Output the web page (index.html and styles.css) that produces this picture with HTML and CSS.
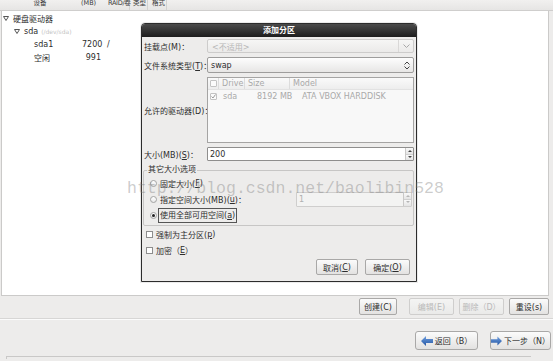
FILE: index.html
```html
<!DOCTYPE html>
<html>
<head>
<meta charset="utf-8">
<title>添加分区</title>
<link rel="stylesheet" href="styles.css">
</head>
<body>
<div class="screen">
  <div class="colhead">
    <span class="ch c-dev">设备</span>
    <span class="ch c-mb">(MB)</span>
    <span class="ch c-raid">RAID/卷</span>
    <span class="ch c-type">类型</span>
    <span class="ch c-fmt">格式</span>
  </div>

  <div class="tree">
    <div class="trow lvl0"><svg class="tri" width="6" height="5" viewBox="0 0 6 5"><polygon points="0.5,0.5 5.5,0.5 3,4.5" fill="none" stroke="#555" stroke-width="1"/></svg>硬盘驱动器</div>
    <div class="trow lvl1"><svg class="tri" width="6" height="5" viewBox="0 0 6 5"><polygon points="0.5,0.5 5.5,0.5 3,4.5" fill="none" stroke="#555" stroke-width="1"/></svg>sda <span class="dim">(/dev/sda)</span></div>
    <div class="trow lvl2"><span class="tname">sda1</span><span class="tsize">7200</span><span class="tmount">/</span></div>
    <div class="trow lvl2"><span class="tname">空闲</span><span class="tsize">991</span></div>
  </div>

  <div class="actions">
    <span class="btn b-create">创建(C)</span>
    <span class="btn dis b-edit">编辑(E)</span>
    <span class="btn dis b-del">删除（D）</span>
    <span class="btn b-reset">重设(s)</span>
  </div>
  <div class="sep"></div>
  <div class="nav">
    <span class="btn navbtn b-back"><svg width="12" height="10" viewBox="0 0 12 10"><defs><linearGradient id="bl" x1="0" y1="0" x2="0" y2="1"><stop offset="0" stop-color="#6f9fe0"/><stop offset="1" stop-color="#2556a3"/></linearGradient></defs><polygon points="0,5 5,0 5,3 12,3 12,7 5,7 5,10" fill="url(#bl)"/></svg>返回（B）</span>
    <span class="btn navbtn b-next"><svg width="12" height="10" viewBox="0 0 12 10"><defs><linearGradient id="bl2" x1="0" y1="0" x2="0" y2="1"><stop offset="0" stop-color="#6f9fe0"/><stop offset="1" stop-color="#2556a3"/></linearGradient></defs><polygon points="12,5 7,0 7,3 0,3 0,7 7,7 7,10" fill="url(#bl2)"/></svg>下一步（N）</span>
  </div>
  <div class="hscroll"></div>

  <div class="dialog">
    <div class="dtitle">添加分区</div>
    <div class="dbody">
      <div class="frow r-mount">
        <span class="flabel">挂载点(M)：</span>
        <div class="field combo disabled">
          <span class="ctext">&lt;不适用&gt;</span>
          <span class="carrow"><svg width="7" height="4" viewBox="0 0 7 4"><polyline points="0.5,0.5 3.5,3.5 6.5,0.5" fill="none" stroke="#a8a8a8" stroke-width="1"/></svg></span>
        </div>
      </div>
      <div class="frow r-fs">
        <span class="flabel">文件系统类型(<u>T</u>)：</span>
        <div class="field combo">
          <span class="ctext">swap</span>
          <span class="cupdown"><svg width="6" height="9" viewBox="0 0 6 9"><polyline points="0.5,3.5 3,1 5.5,3.5" fill="none" stroke="#444" stroke-width="1"/><polyline points="0.5,5.5 3,8 5.5,5.5" fill="none" stroke="#444" stroke-width="1"/></svg></span>
        </div>
      </div>
      <div class="frow r-drives">
        <span class="flabel">允许的驱动器(D)：</span>
        <div class="field listbox">
          <div class="lbh">
            <span class="lc c0"><span class="cb dim-cb"></span></span>
            <span class="lc c1">Drive</span>
            <span class="lc c2">Size</span>
            <span class="lc c3">Model</span>
          </div>
          <div class="lbr">
            <span class="lc d0"><span class="cb dim-cb checked"><svg width="5" height="5" viewBox="0 0 5 5"><polyline points="0.5,2.5 2,4 4.5,0.5" fill="none" stroke="#9a9a9a" stroke-width="1"/></svg></span></span>
            <span class="lc d1">sda</span>
            <span class="lc d2">8192 MB</span>
            <span class="lc d3">ATA VBOX HARDDISK</span>
          </div>
        </div>
      </div>
      <div class="frow r-size">
        <span class="flabel">大小(MB)(<u>S</u>)：</span>
        <div class="field spin">
          <span class="stext">200</span>
          <span class="sbtns"><span class="sb up"></span><span class="sb down"></span></span>
        </div>
      </div>

      <fieldset class="opts">
        <legend>其它大小选项</legend>
        <div class="orow"><span class="radio"></span>固定大小(<u>F</u>)</div>
        <div class="orow"><span class="radio"></span>指定空间大小(MB)(<u>u</u>)：
          <div class="spin small disabled">
            <span class="stext">1</span>
            <span class="sbtns"><span class="sb up"></span><span class="sb down"></span></span>
          </div>
        </div>
        <div class="orow"><span class="radio on"></span><span class="focus">使用全部可用空间(<u>a</u>)</span></div>
      </fieldset>

      <div class="crow"><span class="check"></span>强制为主分区(<u>p</u>)</div>
      <div class="crow"><span class="check"></span>加密（<u>E</u>）</div>

      <div class="dbtns">
        <span class="btn b-cancel">取消(<u>C</u>)</span>
        <span class="btn b-ok">确定(<u>O</u>)</span>
      </div>
    </div>
  </div>

  <div class="watermark">http://blog.csdn.net/baolibin528</div>
</div>
</body>
</html>
```

FILE: styles.css
```css
* { box-sizing: border-box; }

body {
  margin: 0;
  background: #edeceb;
  font-family: "DejaVu Sans", "Noto Sans CJK SC", sans-serif;
  font-size: 8px;
  color: #2d2d2d;
}

.screen {
  position: relative;
  width: 553px;
  height: 361px;
  overflow: hidden;
  background: #edeceb;
}

/* column header */
.colhead {
  height: 11px;
  display: flex;
  background: linear-gradient(#f1f0ef, #e6e5e4);
  border-bottom: 1px solid #cfcecd;
  font-size: 6.5px;
  line-height: 6px;
  color: #3a3a3a;
  overflow: hidden;
  white-space: nowrap;
}
.ch { display: block; height: 10px; }
.c-dev { width: 80px; text-align: center; }
.c-mb { width: 28px; padding-left: 1px; }
.c-raid { width: 22px; border-right: 1px solid #d3d2d1; letter-spacing: -0.3px; }
.c-type { width: 18px; padding-left: 3px; border-right: 1px solid #d3d2d1; }
.c-fmt { width: 19px; padding-left: 4px; border-right: 1px solid #d3d2d1; }

/* tree */
.tree {
  height: 285px;
  width: 548px;
  margin-left: 1px;
  background: #fff;
  border: 1px solid #cbcac9;
  border-top: none;
  padding-top: 1px;
}
.trow {
  height: 13px;
  display: flex;
  align-items: center;
  white-space: nowrap;
}
.tri { margin-right: 4px; flex: none; }
.lvl0 { padding-left: 1px; }
.lvl1 { padding-left: 12px; }
.lvl2 { padding-left: 32px; }
.dim { color: #c4c4c4; font-size: 6px; margin-left: 3px; }
.tname { width: 48px; }
.tsize { width: 19px; text-align: right; }
.tmount { margin-left: 6px; }

/* buttons */
.btn {
  display: flex;
  align-items: center;
  justify-content: center;
  border: 1px solid #a9a8a7;
  border-radius: 2px;
  background: linear-gradient(#fbfbfb, #e3e2e1);
  color: #2d2d2d;
  white-space: nowrap;
}
.btn.dis { color: #b9b9b9; border-color: #cfcecd; background: linear-gradient(#f4f4f3, #eaeae9); }

.actions {
  display: flex;
  justify-content: flex-end;
  height: 17px;
  margin-top: 2px;
  padding-right: 4px;
}
.b-create { width: 38px; margin-right: 12px; }
.b-edit { width: 45px; margin-right: 5px; }
.b-del { width: 45px; margin-right: 5px; }
.b-reset { width: 40px; }

.sep {
  height: 2px;
  margin-top: 3px;
  border-top: 1px solid #d7d6d5;
  border-bottom: 1px solid #fbfbfb;
}

.nav {
  display: flex;
  justify-content: flex-end;
  height: 19px;
  margin-top: 11px;
  padding-right: 2px;
  gap: 12px;
}
.navbtn { gap: 2px; border-radius: 3px; }
.b-back { width: 63px; }
.b-next { width: 61px; }

.hscroll {
  margin: 6px 0 0 6px;
  width: 525px;
  height: 3px;
  border-top: 1px solid #c9c8c7;
  border-left: 1px solid #c9c8c7;
}

/* dialog */
.dialog {
  position: absolute;
  left: 141px;
  top: 23px;
  width: 276px;
  height: 259px;
  background: #edeceb;
  border: 1px solid #2c2c2c;
  border-radius: 4px 4px 0 0;
  box-shadow: 0 0 0 1px rgba(0,0,0,0.08);
}
.dtitle {
  height: 13px;
  line-height: 13px;
  background: linear-gradient(#4b4b4b, #1d1d1d);
  color: #fff;
  font-weight: bold;
  text-align: center;
  border-radius: 3px 3px 0 0;
}
.dbody { padding: 2px 2px 0 2px; }

.frow { display: flex; align-items: center; }
.flabel { width: 63px; flex: none; white-space: nowrap; }
.field { flex: 1; }
.r-fs, .r-drives, .r-size { margin-top: 4px; }

.combo {
  display: flex;
  align-items: center;
  border: 1px solid #9e9d9c;
  border-radius: 2px;
  background: linear-gradient(#fdfdfd, #e7e6e5);
}
.r-mount .combo { height: 14px; }
.r-fs .combo { height: 16px; }
.combo .ctext { flex: 1; padding-left: 3px; }
.combo.disabled { border-color: #cdcccb; background: linear-gradient(#f6f6f5, #ebeae9); color: #b7b7b7; }
.combo.disabled .ctext { padding-left: 4px; }
.carrow {
  width: 15px;
  height: 100%;
  border-left: 1px solid #d9d8d7;
  display: flex;
  align-items: center;
  justify-content: center;
}
.cupdown { width: 12px; display: flex; justify-content: center; }

.listbox {
  height: 66px;
  border: 1px solid #a5a4a3;
  background: #f8f8f8;
  color: #a9a9a9;
}
.lbh {
  display: flex;
  height: 12px;
  align-items: stretch;
  background: linear-gradient(#fafafa, #ededed);
  border-bottom: 1px solid #e2e2e2;
}
.lbr { display: flex; height: 13px; align-items: center; }
.lc { display: flex; align-items: center; white-space: nowrap; }
.c0, .d0 { width: 11px; justify-content: center; }
.c0 { border-right: 1px solid #dcdcdc; }
.c1 { width: 26px; padding-left: 3px; border-right: 1px solid #dcdcdc; }
.c2 { width: 45px; padding-left: 3px; border-right: 1px solid #dcdcdc; }
.c3 { padding-left: 3px; }
.d1 { width: 34px; padding-left: 4px; }
.d2 { width: 45px; padding-left: 4px; }
.d3 { padding-left: 4px; }

.cb {
  width: 7px;
  height: 7px;
  border: 1px solid #c3c3c3;
  background: #fbfbfb;
  border-radius: 1px;
  display: flex;
  align-items: center;
  justify-content: center;
}

.spin {
  display: flex;
  align-items: center;
  height: 14px;
  border: 1px solid #8f8e8d;
  background: #fff;
  border-radius: 1px;
}
.spin .stext { flex: 1; padding-left: 2px; }
.sbtns {
  width: 8px;
  height: 100%;
  display: flex;
  flex-direction: column;
  border-left: 1px solid #c9c8c7;
}
.sb {
  flex: 1;
  position: relative;
  background: linear-gradient(#f9f9f9, #e4e4e4);
}
.sb.up { border-bottom: 1px solid #cfcfcf; }
.sb::after {
  content: "";
  position: absolute;
  left: 1.5px;
  border-left: 2px solid transparent;
  border-right: 2px solid transparent;
}
.sb.up::after { top: 2px; border-bottom: 2px solid #444; }
.sb.down::after { top: 1px; border-top: 2px solid #444; }

.spin.small {
  margin-left: auto;
  width: 116px;
  height: 15px;
}
.spin.disabled { border-color: #cfcecd; background: #f3f3f2; color: #b0b0b0; }
.spin.disabled .sb.up::after { border-bottom-color: #b5b5b5; }
.spin.disabled .sb.down::after { border-top-color: #b5b5b5; }

.opts {
  margin: 4px 0 0 -1px;
  padding: 0 1px 2px 2px;
  border: 1px solid #c7c6c5;
  border-radius: 2px;
  min-width: 0;
}
.opts legend {
  padding: 0 1px;
  margin-left: 1px;
  line-height: 10px;
  height: 10px;
}
.orow {
  display: flex;
  align-items: center;
  height: 16px;
  white-space: nowrap;
}
.radio {
  width: 7px;
  height: 7px;
  margin: 0 3px 0 4px;
  border: 1px solid #a3a3a3;
  border-radius: 50%;
  background: linear-gradient(#fff, #e8e8e8);
  flex: none;
  position: relative;
}
.radio.on::after {
  content: "";
  position: absolute;
  left: 1px;
  top: 1px;
  width: 3px;
  height: 3px;
  border-radius: 50%;
  background: #222;
}
.focus {
  outline: 1px solid #555;
  padding: 0 1px;
  margin-left: -1px;
  line-height: 13px;
}

.crow {
  display: flex;
  align-items: center;
  height: 16px;
  padding-left: 2px;
  white-space: nowrap;
}
.check {
  width: 7px;
  height: 7px;
  margin-right: 3px;
  border: 1px solid #8d8d8d;
  background: #fff;
  flex: none;
}

.dbtns {
  display: flex;
  justify-content: flex-end;
  gap: 7px;
  height: 16px;
  margin-top: 1px;
  padding-right: 4px;
}
.b-cancel { width: 42px; }
.b-ok { width: 45px; }

.watermark {
  position: absolute;
  left: 127px;
  top: 180px;
  font-family: "Liberation Mono", monospace;
  font-size: 16.5px;
  line-height: 17px;
  color: rgba(120, 120, 120, 0.38);
  white-space: nowrap;
  pointer-events: none;
}
```
